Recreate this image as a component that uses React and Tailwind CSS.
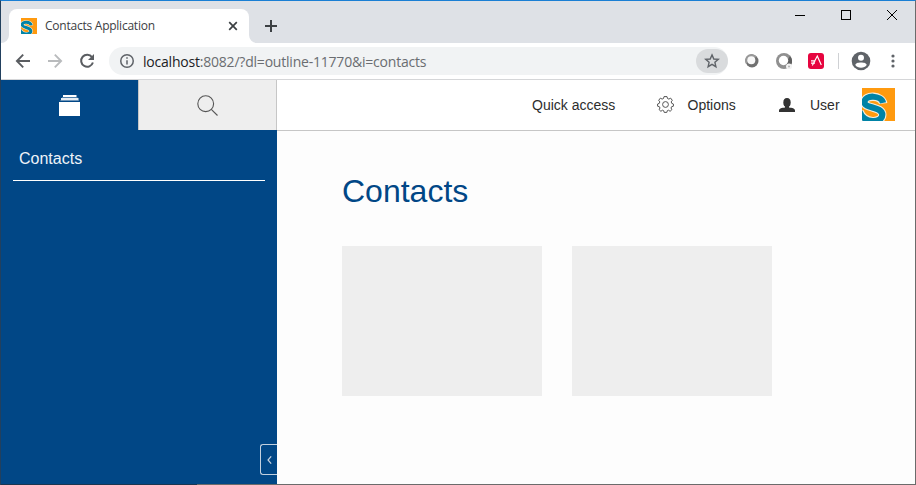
import React from "react";

const ui = "font-['Open_Sans','Noto_Sans',sans-serif]";

function Logo({ className }) {
  return (
    <svg className={className} viewBox="0 0 33 33">
      <rect width="33" height="33" fill="#ff9a0f" />
      <g fill="none">
        <path d="M21.200 15.500C20 7.300 2.500 6.300 2.500 14.200C2.500 20.800 20.300 18.200 20.300 26.800C20.300 35.500 2 36 -2.500 23.500" stroke="#f6eddc" strokeWidth="8.400" />
        <path d="M21 14.800C19.500 7.300 2.500 6.300 2.500 14.200C2.500 20.800 20.300 18.200 20.300 26.800C20.300 35.500 2 36 -2.500 23.500" stroke="#0083a6" strokeWidth="6.200" />
      </g>
    </svg>
  );
}

function TabStrip() {
  return (
    <div className="flex h-[42px] shrink-0 items-start bg-[#dee1e6]">
      <svg className="mt-[34px] h-2 w-2 shrink-0" viewBox="0 0 8 8"><path d="M8 0V8H0A8 8 0 0 0 8 0Z" fill="#fff" /></svg>
      <div className="mt-2 flex h-[34px] w-[240px] items-center rounded-t-lg bg-white pl-3 pr-[11px]">
        <Logo className="h-4 w-4 shrink-0" />
        <span className={`ml-2 flex-1 whitespace-nowrap text-[12px] tracking-[-0.24px] text-[#3c4043] ${ui}`}>Contacts Application</span>
        <svg className="h-[10px] w-[10px]" viewBox="0 0 10 10"><path d="M1.200 1.200L8.800 8.800M8.800 1.200L1.200 8.800" stroke="#3c4043" strokeWidth="1.700" /></svg>
      </div>
      <svg className="mt-[34px] h-2 w-2 shrink-0" viewBox="0 0 8 8"><path d="M0 0V8H8A8 8 0 0 1 0 0Z" fill="#fff" /></svg>
      <svg className="ml-2 mt-[19px] h-3 w-3" viewBox="0 0 12 12"><path d="M6 0V12M0 6H12" stroke="#3c4043" strokeWidth="2" /></svg>
      <div className="ml-auto mr-[18px] mt-[9px] flex items-center gap-9">
        <svg className="h-[10px] w-[10px]" viewBox="0 0 10 10"><path d="M0 5.500H10" stroke="#000" /></svg>
        <svg className="h-[10px] w-[10px]" viewBox="0 0 10 10"><rect x=".5" y=".5" width="9" height="9" fill="none" stroke="#000" /></svg>
        <svg className="h-[10px] w-[10px]" viewBox="0 0 10 10"><path d="M0 0L10 10M10 0L0 10" stroke="#000" /></svg>
      </div>
    </div>
  );
}

function Toolbar() {
  return (
    <div className="flex h-9 shrink-0 items-center bg-white pl-[14px] pr-[19px]">
      <svg className="h-4 w-4" viewBox="0 0 16 16"><path d="M15 8H2M8.200 1.700L1.900 8L8.200 14.300" fill="none" stroke="#5a5d61" strokeWidth="1.900" /></svg>
      <svg className="ml-4 h-4 w-4" viewBox="0 0 16 16"><path d="M1 8H14M7.800 1.700L14.100 8L7.800 14.300" fill="none" stroke="#b9bbbd" strokeWidth="1.900" /></svg>
      <svg className="ml-4 h-4 w-4" viewBox="0 0 16 16"><path d="M13 4.200A6 6 0 1 0 13.900 9.500" fill="none" stroke="#5a5d61" strokeWidth="2" /><path d="M15 1V7H9Z" fill="#5a5d61" /></svg>
      <div className="ml-[14px] flex h-7 w-[619px] items-center rounded-full bg-[#f1f3f4] pl-[11px]">
        <svg className="h-[14px] w-[14px]" viewBox="0 0 14 14"><circle cx="7" cy="7" r="6.250" fill="none" stroke="#5f6368" strokeWidth="1.500" /><path d="M7 3.300V4.800M7 6.200V10.600" stroke="#5f6368" strokeWidth="1.500" /></svg>
        <span className={`ml-[9px] flex-1 whitespace-nowrap text-[14px] tracking-[-0.21px] text-[#6a6d71] ${ui}`}>
          <span className="text-[#202124]">localhost</span>:8082/?dl=outline-11770&amp;i=contacts
        </span>
        <div className="flex h-6 w-8 items-center justify-center rounded-full bg-[#d9dbdd]">
          <svg className="h-4 w-4" viewBox="0 0 16 16"><path d="M8 1.900L9.800 6L14.300 6.400L10.900 9.300L11.900 13.700L8 11.400L4.100 13.700L5.100 9.300L1.700 6.400L6.200 6Z" fill="none" stroke="#5f6368" strokeWidth="1.400" /></svg>
        </div>
      </div>
      <div className="ml-4 flex items-center">
        <svg className="h-4 w-4" viewBox="0 0 16 16"><circle cx="8" cy="8" r="6.500" fill="#707070" /><path d="M2 11A6.500 6.500 0 0 1 13 4L8 5Z" fill="#999" /><circle cx="7.300" cy="7.300" r="4" fill="#f8f8f8" /></svg>
        <svg className="ml-4 h-4 w-4" viewBox="0 0 16 16"><circle cx="8" cy="8" r="8" fill="#909090" /><path d="M14 3A8 8 0 0 1 15 12L10 15L11 8Z" fill="#606060" /><circle cx="7.500" cy="7.500" r="4.700" fill="#fff" /><circle cx="13" cy="13.500" r="3" fill="#f2f2f2" /><circle cx="13" cy="13.500" r="1" fill="#b5b5b5" /></svg>
        <svg className="ml-4 h-4 w-4" viewBox="0 0 16 16"><rect width="16" height="16" rx="3" fill="#e6053f" /><path d="M3 7.800H7.500M3 10.200H7M4.300 12.500L9.300 3L13.300 12" fill="none" stroke="#fff" strokeWidth="1.200" /></svg>
        <div className="ml-[14px] h-4 w-px bg-[#cfd1d4]" />
        <svg className="ml-[12px] h-5 w-5" viewBox="0 0 20 20"><circle cx="10" cy="10" r="9.300" fill="#5f6368" /><circle cx="10" cy="6.800" r="3" fill="#fff" /><path d="M4.300 14C4.300 10.700 15.700 10.700 15.700 14C14.500 15.700 12.400 16.800 10 16.800S5.500 15.700 4.300 14Z" fill="#fff" /></svg>
        <svg className="ml-[20px] h-[14px] w-[4px]" viewBox="0 0 4 14" fill="#5f6368"><circle cx="2" cy="2" r="1.600" /><circle cx="2" cy="7" r="1.600" /><circle cx="2" cy="12" r="1.600" /></svg>
      </div>
    </div>
  );
}

function Sidebar() {
  return (
    <aside className="flex w-[276px] shrink-0 flex-col bg-[#014786]">
      <div className="flex h-[50px] shrink-0">
        <div className="flex w-[137px] items-center justify-center">
          <svg className="h-[21px] w-[21px]" viewBox="0 0 21 21" fill="#fff"><path d="M4 0H17.500V2H4Z" /><path d="M2 3H19.500V5.300H2Z" opacity=".9" /><path d="M0 7H21V21H0Z" /><path d="M3 2H18.500V3H3ZM1 5.300H20V6H1Z" opacity=".3" /></svg>
        </div>
        <div className="flex w-[139px] items-center justify-center border-x border-[#c6c6c6] bg-[#eeeeee]">
          <svg className="h-[21px] w-[21px]" viewBox="0 0 21 21" fill="none" stroke="#555" strokeWidth="1.100"><circle cx="8.700" cy="8.700" r="7.900" /><path d="M14.300 14.300L20.500 20.500" /></svg>
        </div>
      </div>
      <div className="mx-3 flex h-[51px] items-center border-b border-white pl-[6px] pt-[8px] text-[16px] text-[#eef3f8]">Contacts</div>
      <button className="mb-[9px] ml-auto mt-auto flex h-[31px] w-[17px] items-center justify-center rounded-l-[3px] border border-r-0 border-[#c3d0de]">
        <svg className="h-2 w-[5px]" viewBox="0 0 5 8"><path d="M4.200 .3L1 4L4.200 7.700" fill="none" stroke="#c3d0de" strokeWidth="1.200" /></svg>
      </button>
    </aside>
  );
}

function Header() {
  return (
    <header className="flex h-[51px] shrink-0 items-center border-b border-[#c6c6c6] bg-white pl-[255px] pr-5 text-[14px] text-[#2d2d2d]">
      <span className="w-[125px] whitespace-nowrap">Quick access</span>
      <svg className="-mt-px h-[17px] w-[17px] shrink-0" viewBox="0 0 17 17" fill="none" stroke="#555" strokeWidth="1"><circle cx="8.500" cy="8.500" r="2.900" /><path d="M7 .6H10L10.500 2.500L11.900 3.100L13.600 2.100L15.300 4.300L14.200 5.900L14.700 7.300L16.400 8V10.200L14.600 10.700L14 12L14.900 13.600L13.100 15.300L11.500 14.200L10.300 14.700L9.800 16.400H7.200L6.700 14.700L5.500 14.200L3.900 15.300L2.100 13.600L3 12L2.400 10.700L.6 10.200V8L2.300 7.300L2.800 5.900L1.700 4.300L3.400 2.100L5.100 3.100L6.500 2.500Z" strokeLinejoin="round" /></svg>
      <span className="ml-[13.500px] w-[91.500px]">Options</span>
      <svg className="h-[14px] w-4 shrink-0" viewBox="0 0 16 14" fill="#333"><ellipse cx="8" cy="4.500" rx="3.700" ry="4.500" /><path d="M6 7H10V9.500C13 9.800 16 10.500 16 12.500V14H0V12.500C0 10.500 3 9.800 6 9.500Z" /></svg>
      <span className="ml-[15px]">User</span>
      <Logo className="-mt-[2px] ml-auto h-[33px] w-[33px]" />
    </header>
  );
}

export default function App() {
  return (
    <div className="flex h-[485px] w-[916px] flex-col overflow-hidden border border-b-0 border-l-[#22405e] border-r-[#6b6b6b] border-t-[#1a7fd4] bg-white font-['Liberation_Sans',Arial,sans-serif]">
      <TabStrip />
      <Toolbar />
      <div className="h-px shrink-0 bg-[#d5d6d8]" />
      <div className="flex min-h-0 flex-1">
        <Sidebar />
        <div className="flex flex-1 flex-col bg-[#fdfdfd]">
          <Header />
          <main className="px-[65px] pt-[40px]">
            <h1 className="text-[32px] leading-10 text-[#014786]">Contacts</h1>
            <div className="mt-[35px] flex gap-[30px]">
              <div className="h-[150px] w-[200px] bg-[#eeeeee]" />
              <div className="h-[150px] w-[200px] bg-[#eeeeee]" />
            </div>
          </main>
        </div>
      </div>
      <div className="flex h-px shrink-0 bg-[#6b6b6b]">
        <div className="w-[196px] bg-[#1b3650]" />
      </div>
    </div>
  );
}
